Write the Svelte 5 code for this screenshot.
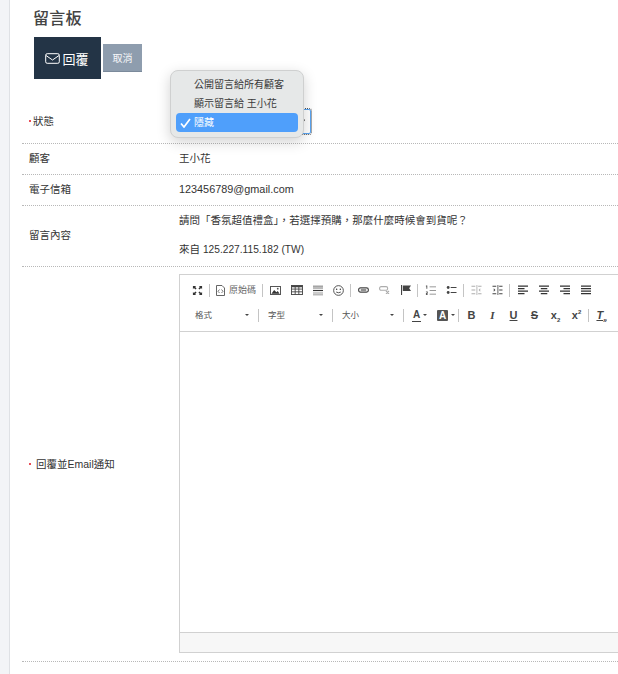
<script>
  const rows1 = [
    { label: '顧客', value: '王小花', cls: '' },
    { label: '電子信箱', value: '123456789@gmail.com', cls: 'latin' }
  ];
</script>

<div class="page">
  <aside class="side"></aside>
  <main class="main">
    <h1>留言板</h1>
    <div class="actions">
      <button class="reply">
        <svg width="15" height="11" viewBox="0 0 15 11" fill="none" stroke="#fff" stroke-width="1"><rect x=".7" y=".7" width="13.6" height="9.6" rx="1.5"/><path d="M1 2.5 7.5 7 14 2.5"/></svg>
        <span>回覆</span>
      </button>
      <button class="cancel">取消</button>
    </div>

    <div class="row status">
      <div class="label"><i class="req"></i>狀態</div>
      <div class="value">
        <div class="select-wrap">
          <div class="select"><span class="caret"></span></div>
          <div class="menu">
            <div class="opt">公開留言給所有顧客</div>
            <div class="opt">顯示留言給 王小花</div>
            <div class="opt on">
              <svg class="check" width="11" height="10" viewBox="0 0 11 10" fill="none" stroke="#fff" stroke-width="1.7"><path d="M1 5.5 4 9 10 1"/></svg>
              隱藏
            </div>
          </div>
        </div>
      </div>
    </div>
    {#each rows1 as r}
      <div class="row plain"><div class="label">{r.label}</div><div class="value {r.cls}">{r.value}</div></div>
    {/each}
    <div class="row msg">
      <div class="label">留言內容</div>
      <div class="value">
        <p>請問「香氛超值禮盒」，若選擇預購，那麼什麼時候會到貨呢？</p>
        <p>來自 <span class="ip">125.227.115.182 (TW)</span></p>
      </div>
    </div>
    <div class="row editor-row">
      <div class="label"><i class="req"></i>回覆並Email通知</div>
      <div class="value">
        <div class="editor">
          <div class="toolbar">
            <div class="tb tb1">
              <span class="btn"><svg width="11" height="11" viewBox="0 0 12 12" fill="#333"><path d="M1 1h3.500L3.400 2.100 5 3.700 3.700 5 2.100 3.400 1 4.500zM11 1v3.500L9.900 3.400 8.300 5 7 3.700l1.600-1.600L7.500 1zM1 11V7.500l1.100 1.100L3.700 7 5 8.300 3.400 9.900 4.500 11zM11 11H7.500l1.100-1.100L7 8.300 8.300 7l1.600 1.600L11 7.500z"/></svg></span>
              <b class="sep"></b>
              <span class="btn srcbtn"><svg width="9" height="11" viewBox="0 0 9 11" fill="none" stroke="#555" stroke-width=".9"><path d="M.5.500h5.500L8.500 3v7.500h-8z"/><path d="M3.500 4.500 2 6.300 3.500 8M5.500 4.500 7 6.300 5.500 8" stroke-width=".8"/></svg><span class="src">原始碼</span></span>
              <b class="sep"></b>
              <span class="btn"><svg width="11" height="9" viewBox="0 0 12 10"><rect x=".5" y=".5" width="11" height="9" fill="#fff" stroke="#444"/><path d="M1.500 8.500 4.500 4.500 7 7l1.500-1.500 2 3z" fill="#333"/><circle cx="8.500" cy="3" r="1" fill="#555"/></svg></span>
              <span class="btn"><svg width="12" height="10" viewBox="0 0 13 11" fill="none" stroke="#444"><rect x=".5" y=".5" width="12" height="10"/><path d="M.5 1.500h12" stroke-width="2"/><path d="M.5 4.500h12M.5 7.500h12M4.500 2v8.500M8.500 2v8.500"/></svg></span>
              <span class="btn"><svg width="10" height="11" viewBox="0 0 12 12" fill="none"><path d="M0 .8h12M0 3h12" stroke="#777" stroke-width="1.200"/><path d="M0 6h12" stroke="#333" stroke-width="1.400"/><path d="M0 9h12M0 11.200h12" stroke="#999" stroke-width="1.200"/></svg></span>
              <span class="btn"><svg width="11" height="11" viewBox="0 0 12 12" fill="none" stroke="#444"><circle cx="6" cy="6" r="5.300"/><circle cx="4" cy="4.700" r=".8" fill="#333" stroke="none"/><circle cx="8" cy="4.700" r=".8" fill="#333" stroke="none"/><path d="M3.500 7.700q2.500 1.500 5 0"/></svg></span>
              <b class="sep"></b>
              <span class="btn"><svg width="11" height="6" viewBox="0 0 12 6" fill="none" stroke="#444" stroke-width="1.300"><rect x=".7" y=".7" width="10.600" height="4.600" rx="2"/><path d="M3 3h6"/></svg></span>
              <span class="btn faint"><svg width="11" height="8" viewBox="0 0 11 8" fill="none" stroke="#333" stroke-width="1.100"><rect x=".6" y=".6" width="8" height="3.600" rx="1.500"/><path d="m7 5 3 3M10 5 7 8"/></svg></span>
              <span class="btn"><svg width="10" height="10" viewBox="0 0 11 11"><path d="M0 0h1.200v11H0zM2 .5h9L9 3.500l2 3H2z" fill="#444"/></svg></span>
              <b class="sep"></b>
              <span class="btn"><svg width="11" height="11" viewBox="0 0 12 12" fill="#555"><path d="M1 .5h1.500v3.500H1.500V1.500H1zM1 7h2v2.500H2v.6h1v.9H1V8.800h1V8H1z"/><path d="M5 1.500h7v.9H5zM5 5.500h7v.9H5zM5 9.500h7v.9H5z" fill="#777"/></svg></span>
              <span class="btn"><svg width="11" height="10" viewBox="0 0 12 12" fill="#444"><circle cx="2" cy="3" r="1.700"/><circle cx="2" cy="9" r="1.700"/><path d="M5 2.300h7v1.300H5zM5 8.300h7v1.300H5z"/></svg></span>
              <b class="sep"></b>
              <span class="btn faint"><svg width="11" height="10" viewBox="0 0 12 12" fill="#333"><path d="M6 0h1v12H6zM0 1h4.500v1H0zM0 5.500h4.500v1H0zM0 10h4.500v1H0zM8 1h4v1H8zM8 10h4v1H8zM8.500 6l2-2v4z"/></svg></span>
              <span class="btn"><svg width="11" height="10" viewBox="0 0 12 12" fill="#444"><path d="M6 0h1v12H6zM0 1h4.500v1H0zM0 10h4.500v1H0zM8 1h4v1H8zM8 5.500h4v1H8zM8 10h4v1H8zM3.500 6l-2-2v4z"/></svg></span>
              <b class="sep"></b>
              <span class="btn"><svg class="al" viewBox="0 0 10 10" fill="#333"><path d="M0 .5h10v1.200H0zM0 3h6.500v1.200H0zM0 5.500h10v1.200H0zM0 8h6.500v1.200H0z"/></svg></span>
              <span class="btn"><svg class="al" viewBox="0 0 10 10" fill="#333"><path d="M0 .5h10v1.200H0zM1.800 3h6.500v1.200H1.800zM0 5.500h10v1.200H0zM1.800 8h6.500v1.200H1.800z"/></svg></span>
              <span class="btn"><svg class="al" viewBox="0 0 10 10" fill="#333"><path d="M0 .5h10v1.200H0zM3.500 3H10v1.200H3.500zM0 5.500h10v1.200H0zM3.500 8H10v1.200H3.500z"/></svg></span>
              <span class="btn"><svg class="al" viewBox="0 0 10 10" fill="#333"><path d="M0 .5h10v1.200H0zM0 3h10v1.200H0zM0 5.500h10v1.200H0zM0 8h10v1.200H0z"/></svg></span>
            </div>
            <div class="tb tb2">
              <div class="combo w70"><span>格式</span><em></em></div>
              <b class="sep"></b>
              <div class="combo w70"><span>字型</span><em></em></div>
              <b class="sep"></b>
              <div class="combo w68"><span>大小</span><em></em></div>
              <b class="sep"></b>
              <div class="color c1"><span class="A">A<u></u></span><em></em></div>
              <div class="color c2"><span class="A boxed">A</span><em></em></div>
              <b class="sep"></b>
              <span class="tg b">B</span>
              <span class="tg i">I</span>
              <span class="tg u">U</span>
              <span class="tg s">S</span>
              <span class="tg x">x<sub>2</sub></span>
              <span class="tg x">x<sup>2</sup></span>
              <b class="sep"></b>
              <span class="tg tx">T<sub>x</sub></span>
            </div>
          </div>
          <div class="content"></div>
          <div class="foot"></div>
        </div>
      </div>
    </div>
  </main>
</div>

<style>
  :global(body) { margin: 0; background: #fff; overflow: hidden; }
  .page { display: flex; width: 618px; height: 674px; overflow: hidden; font-family: "Liberation Sans", "Noto Sans CJK TC", sans-serif; color: #333; font-size: 10.5px; }
  .side { flex: 0 0 9px; background: #f3f4f7; border-right: 1px solid #dfe1e5; }
  .main { flex: 1; min-width: 0; padding-left: 12px; }
  h1 { margin: 0; padding: 9px 0 0 11px; font-size: 16px; line-height: 20px; font-weight: 500; color: #444; letter-spacing: .2px; }
  .actions { display: flex; align-items: flex-end; gap: 2px; margin: 8px 0 0 12px; height: 42px; }
  button { border: 0; font-family: inherit; padding: 0; display: flex; align-items: center; justify-content: center; }
  .reply { width: 67px; height: 42px; background: #233446; color: #fff; font-size: 13px; gap: 2px; padding-right: 1px; }
  .cancel { width: 39px; height: 28px; margin-bottom: 7px; background: #8e9dae; color: #f6f7f9; font-size: 10px; border-bottom: 1px solid #7b8a9b; }
  .row { display: flex; align-items: center; border-bottom: 1px dotted #b8b8b8; margin-right: -40px; }
  .label { flex: 0 0 157px; padding-left: 7px; box-sizing: border-box; position: relative; line-height: 14px; }
  .value { flex: 1; min-width: 0; line-height: 14px; }
  .latin { font-size: 10.85px; }
  .ip { font-size: 10.2px; }
  .req { position: absolute; left: 7px; top: 6px; width: 2px; height: 2px; border-radius: 50%; background: #e2121f; }
  .status { height: 64px; }
  .status .label { padding-left: 11px; top: 10px; }
  .plain { height: 28px; padding-bottom: 2px; }
  .msg { height: 58px; padding-bottom: 2px; }
  .msg p { margin: 0; line-height: 14px; white-space: nowrap; }
  .msg p + p { margin-top: 15px; }
  .editor-row { height: 394px; align-items: flex-start; }
  .editor-row .label { padding-left: 14px; margin-top: 190px; }
  .select-wrap { position: relative; height: 64px; }
  .select { position: absolute; left: 106px; top: 30px; width: 26px; height: 25px; box-sizing: border-box; border: 1px solid #5aa5f2; outline: 1px dotted #555; outline-offset: 0; border-radius: 2px; background: #fff; }
  .caret { position: absolute; right: 6px; top: 9px; width: 2px; height: 4px; background: #333; transform: rotate(40deg); }
  .menu { position: absolute; left: -9px; top: -9px; width: 134px; height: 68px; box-sizing: border-box; padding: 4px 5px; background: #e6e8e8; border: 1px solid #cfd0d0; border-radius: 8px; box-shadow: 0 4px 14px rgba(0,0,0,.18); }
  .opt { height: 19px; line-height: 19px; padding-left: 18px; color: #3a3a3a; white-space: nowrap; position: relative; font-size: 10px; }
  .opt.on { background: #4f9ffb; color: #fff; border-radius: 4px; }
  .check { position: absolute; left: 4px; top: 5px; }
  .editor { margin-top: 7px; width: 480px; height: 379px; box-sizing: border-box; border: 1px solid #d1d1d1; display: flex; flex-direction: column; }
  .toolbar { height: 57px; flex: none; box-sizing: border-box; border-bottom: 1px solid #d1d1d1; padding: 8px 0 0 7px; background: #fff; }
  .tb { display: flex; align-items: center; height: 14px; }
  .tb2 { margin-top: 10px; height: 16px; }
  .btn { flex: 0 0 21px; height: 14px; display: flex; align-items: center; justify-content: center; }
  .faint { opacity: .4; }
  .srcbtn { flex-basis: 49px; justify-content: flex-start; padding-left: 4px; box-sizing: border-box; }
  .al { width: 10px; height: 10px; }
  .sep { width: 1px; height: 13px; background: #c4c4c4; flex: none; display: block; margin: 0 2px 0 1px; }
  .src { margin-left: 4px; font-size: 9px; color: #666; white-space: nowrap; }
  .combo { display: flex; flex: none; align-items: center; justify-content: space-between; box-sizing: border-box; font-size: 8.5px; color: #555; height: 16px; padding: 0 8px 0 7px; }
  .combo:first-child { padding-left: 8px; }
  .w70 { width: 70px; }
  .w68 { width: 67px; }
  .combo em, .color em { display: block; width: 0; height: 0; border: 2px solid transparent; border-top: 2px solid #444; border-bottom: 0; }
  .color { display: flex; flex: none; align-items: center; gap: 3px; box-sizing: border-box; }
  .c1 { width: 25px; padding-left: 7px; }
  .c2 { width: 26px; padding-left: 6px; }
  .A { position: relative; font-weight: 700; font-size: 10px; color: #444; line-height: 11px; height: 13px; display: block; }
  .A u { position: absolute; left: -1px; right: -1px; bottom: 0; height: 1px; background: #444; }
  .A.boxed { background: #555; color: #fff; padding: 0 2px; height: 11px; border-radius: 1px; }
  .tg { font-weight: 700; font-size: 11px; color: #444; display: block; flex: 0 0 21px; text-align: center; line-height: 14px; white-space: nowrap; }
  .tg.i { font-style: italic; font-family: "Liberation Serif", serif; }
  .tg.u { text-decoration: underline; }
  .tg.s { text-decoration: line-through; }
  .tg sub, .tg sup { font-size: 6px; line-height: 0; font-weight: 700; }
  .tg.tx { font-style: italic; text-decoration: underline; }
  .content { flex: 1; background: #fff; }
  .foot { height: 19px; flex: none; background: #f7f7f7; border-top: 1px solid #d1d1d1; }
</style>
